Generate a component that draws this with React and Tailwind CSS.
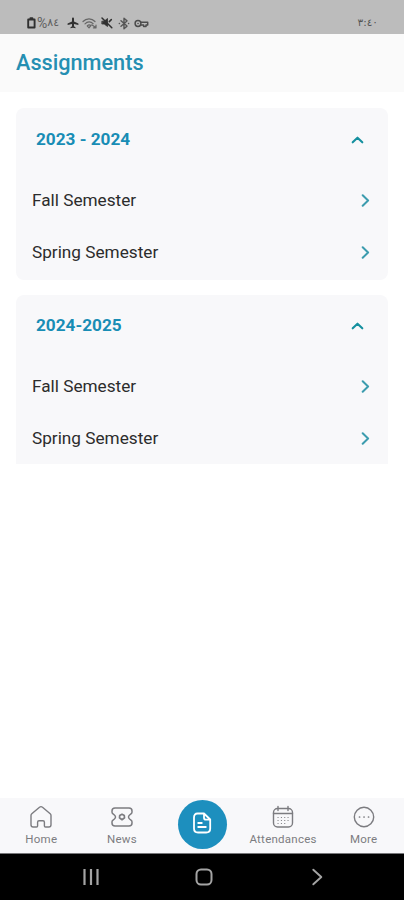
import { useState } from 'react'

const YEARS = [
  { id: 'y1', label: '2023 - 2024', card: 'h-[172px] rounded-lg', head: 'h-[63px] mb-[4px]', semesters: ['Fall Semester', 'Spring Semester'] },
  { id: 'y2', label: '2024-2025', card: 'h-[169px] rounded-t-lg', head: 'h-[61px] mb-[5px]', semesters: ['Fall Semester', 'Spring Semester'] },
]

const stroke = { fill: 'none', stroke: 'currentColor', strokeLinecap: 'round', strokeLinejoin: 'round' }

function StatusBar() {
  return (
    <div className="flex h-[34px] shrink-0 items-start justify-between bg-[#bcbcbc] pt-[16px] pr-[26px] pl-[27px] text-[#303030]">
      <div className="flex h-[14px] items-center">
        <svg width="9" height="12" viewBox="0 0 9 12" {...stroke} strokeWidth="1.9">
          <path d="M1.2 2.5h6.4v8H1.2zM3.4 1.2h2" />
        </svg>
        <span dir="ltr" className="ml-[1px] flex w-[28px] items-center font-['Roboto','DejaVu_Sans',sans-serif] text-[14px] leading-[14px] whitespace-nowrap text-[#606060] [unicode-bidi:bidi-override]">%<span className="text-[11px]">٨٤</span></span>
        <svg className="ml-[2px]" width="12" height="12" viewBox="0 0 12 12" fill="currentColor">
          <path d="M6 .5c.7 0 1 .6 1 1.3v2.6l4.4 2.2v1.3L7 6.9v2.3l1.6 1.2v.9L6 10.7l-2.6.6v-.9L5 9.2V6.9L.6 7.9V6.6L5 4.4V1.8C5 1.1 5.3.5 6 .5z" />
        </svg>
        <svg className="ml-[3px] text-[#666666]" width="16" height="13" viewBox="0 0 16 13" {...stroke} strokeWidth="1.2">
          <path d="M1 4.5c3.3-3.6 8.7-3.6 12 0M3 6.8c2.4-2.5 5.8-2.5 8.1-.2M5.2 8.9c1.2-1.3 2.6-1.3 3.7-.4L7 10.8zM9.8 7.8l4.2 3M14 8.2v2.6h-2.6" />
        </svg>
        <svg className="ml-[3px]" width="12" height="12" viewBox="0 0 12 12" {...stroke} strokeWidth="1.5">
          <path d="M1.2 4.2h2L6.5 1.5v8L3.2 7h-2z" fill="currentColor" strokeWidth=".8" />
          <path d="M1 1l9.8 9.8M8.3 4.6l2-2" />
        </svg>
        <svg className="ml-[5px] text-[#555555]" width="12" height="13" viewBox="0 0 12 13" {...stroke} strokeWidth="1.4">
          <path d="M3 3.8l6 5.3-3 2.6V1.3l3 2.6-6 5.3M1.3 6.5h.2M10.5 6.5h.2" />
        </svg>
        <svg className="ml-[4px] text-[#4c4c4c]" width="15" height="11" viewBox="0 0 15 11" {...stroke} strokeWidth="1.5">
          <circle cx="4" cy="5.5" r="2.9" />
          <path d="M6.7 4.3h7v2.7h-1.7v1.4H9.6V7H6.6M4 5.5h.1" />
        </svg>
      </div>
      <span dir="ltr" className="font-['DejaVu_Sans',sans-serif] text-[10.5px] leading-[13px] text-[#555555] [unicode-bidi:bidi-override]">٣:٤٠</span>
    </div>
  )
}

function Chevron({ up }) {
  if (up) {
    return (
      <svg className="text-[#15909f]" width="14" height="14" viewBox="0 0 14 14" {...stroke} strokeWidth="2.1">
        <path d="M2.7 9.3l4.8-4.6 4.8 4.6" />
      </svg>
    )
  }
  return (
    <svg className="text-[#3c9cae]" width="14" height="14" viewBox="0 0 14 14" {...stroke} strokeWidth="2">
      <path d="M4.7 1.2l5.4 5.3-5.4 5.3" />
    </svg>
  )
}

function YearCard({ year, open, onToggle }) {
  return (
    <section className={`${open ? year.card : 'h-[62px] rounded-lg'} overflow-hidden bg-[#f8f8fa]`}>
      <button onClick={onToggle} className={`${year.head} flex w-full items-center justify-between pr-[24px] pl-[20px]`}>
        <span className="text-[17.2px] font-bold text-[#188db5]">{year.label}</span>
        <Chevron up />
      </button>
      {open && year.semesters.map((s) => (
        <div key={s} className="flex h-[52px] items-center justify-between px-[16px]">
          <span className="text-[17.2px] text-[#2c2c2c]">{s}</span>
          <Chevron />
        </div>
      ))}
    </section>
  )
}

const HomeIcon = () => (
  <svg width="24" height="24" viewBox="0 0 24 24" {...stroke} strokeWidth="1.4">
    <path d="M2 10.500q0-1 .8-1.700l7.700-6.600q1.500-1.200 3 0l7.700 6.600q.8.700.8 1.700v9.300q0 2.200-2.200 2.200h-3.300q-1.100 0-1.100-1.100v-3.700q0-1.400-1.400-1.400h-4q-1.400 0-1.400 1.400v3.700q0 1.100-1.100 1.100H4.200Q2 22 2 19.800z" />
  </svg>
)

const NewsIcon = () => (
  <svg width="24" height="24" viewBox="0 0 24 24" {...stroke} strokeWidth="1.5">
    <path d="M5 3H19Q22 3 22 6V7Q22 8.200 21 8.900L19.600 10Q17.400 12 19.600 14L21 15.100Q22 15.800 22 17V18Q22 21 19 21H5Q2 21 2 18V17Q2 15.800 3 15.100L4.400 14Q6.600 12 4.400 10L3 8.900Q2 8.200 2 7V6Q2 3 5 3z" />
    <path d="M12 9.300l2.300 1.300.2 2.200L12 14.700l-2.500-1.900.2-2.200z" strokeWidth="1.7" />
  </svg>
)

const CalendarIcon = () => (
  <svg width="24" height="24" viewBox="0 0 24 24" {...stroke} strokeWidth="1.4">
    <rect x="2.5" y="3.5" width="19" height="18.5" rx="4" />
    <path d="M7 1.500v4M17 1.500v4M2.500 8.500h19" />
    <path d="M7 12.500h.1M10.400 12.500h.1M13.700 12.500h.1M17 12.500h.1M7 15.500h.1M10.400 15.500h.1M13.700 15.500h.1M17 15.500h.1M7 18.500h.1M10.400 18.500h.1M13.700 18.500h.1" strokeWidth="1.2" />
  </svg>
)

const MoreIcon = () => (
  <svg width="24" height="24" viewBox="0 0 24 24" {...stroke} strokeWidth="1.4">
    <circle cx="12" cy="12" r="9.700" />
    <path d="M7.500 12h.1M12 12h.1M16.500 12h.1" strokeWidth="1.7" />
  </svg>
)

const DocIcon = () => (
  <svg width="24" height="24" viewBox="0 0 24 24" {...stroke} strokeWidth="1.8">
    <path d="M7.500 2.500h6.500l6.200 6v9q0 4-4 4H8q-4 0-4-4v-11q0-4 3.500-4zM14 2.700v4q0 2 2 2h4M8.200 12h3.600M8.200 16h7.600" />
  </svg>
)

function NavItem({ label, icon: Icon }) {
  return (
    <button className="flex flex-col items-center pt-[7px] text-[#7c7c80]">
      <Icon />
      <span className="mt-[2px] text-[11.5px] leading-[16px] tracking-[0.25px]">{label}</span>
    </button>
  )
}

function BottomNav() {
  return (
    <nav className="h-[56px] shrink-0 border-b border-[#77777a] bg-[#f8f8fa]">
      <div className="grid grid-cols-5 pl-px">
        <NavItem label="Home" icon={HomeIcon} />
        <NavItem label="News" icon={NewsIcon} />
        <div className="flex justify-center pt-[2px]">
          <button className="flex size-[49px] items-center justify-center rounded-full bg-[#1d8fbe] pb-[3px] text-white">
            <DocIcon />
          </button>
        </div>
        <NavItem label="Attendances" icon={CalendarIcon} />
        <NavItem label="More" icon={MoreIcon} />
      </div>
    </nav>
  )
}

function SystemNav() {
  return (
    <div className="flex h-[46px] shrink-0 items-center justify-between bg-black pr-[77px] pb-px pl-[81px] text-[#a4a4a4]">
      <svg width="20" height="20" viewBox="0 0 20 20" {...stroke} strokeLinecap="butt" strokeWidth="2.2">
        <path d="M3.500 2v16M10 2v16M16.500 2v16" />
      </svg>
      <svg width="20" height="20" viewBox="0 0 20 20" {...stroke} strokeWidth="2">
        <rect x="2.5" y="2.5" width="15" height="15" rx="4.5" />
      </svg>
      <svg width="20" height="20" viewBox="0 0 20 20" {...stroke} strokeWidth="1.9">
        <path d="M6.300 2.700l8 7.300-8 7.300" />
      </svg>
    </div>
  )
}

export default function App() {
  const [closed, setClosed] = useState({})

  return (
    <div className="flex h-[900px] w-[404px] flex-col overflow-hidden bg-white font-['Roboto',sans-serif]">
      <StatusBar />
      <header className="flex h-[58px] shrink-0 items-center bg-[#fafafa] px-[16px]">
        <h1 className="text-[21.7px] leading-[32px] font-medium text-[#258fb2]">Assignments</h1>
      </header>
      <main className="flex flex-1 flex-col gap-[15px] px-[16px] pt-[16px]">
        {YEARS.map((y) => (
          <YearCard
            key={y.id}
            year={y}
            open={!closed[y.id]}
            onToggle={() => setClosed((prev) => ({ ...prev, [y.id]: !prev[y.id] }))}
          />
        ))}
      </main>
      <BottomNav />
      <SystemNav />
    </div>
  )
}
